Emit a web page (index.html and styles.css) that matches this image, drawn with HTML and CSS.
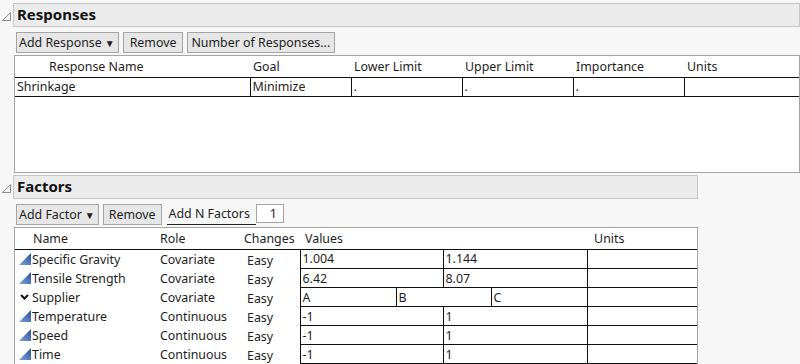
FILE: index.html
```html
<!DOCTYPE html>
<html lang="en">
<head>
<meta charset="utf-8">
<title>Responses and Factors</title>
<link rel="stylesheet" href="styles.css">
</head>
<body>
<div class="page">

  <!-- Responses outline -->
  <section class="outline">
    <div class="outline-head">
      <span class="disclose"><svg width="9" height="9" viewBox="0 0 9 9"><path d="M8.5 0.5 L8.5 8.5 L0.5 8.5 Z" fill="none" stroke="#8a8a8a" stroke-width="1"/></svg></span>
      <div class="title title-wide">Responses</div>
    </div>
    <div class="content">
      <div class="btn-row">
        <button class="btn btn-add-resp">Add Response <span class="drop">&#9660;</span></button>
        <button class="btn btn-remove-resp">Remove</button>
        <button class="btn btn-num">Number of Responses...</button>
      </div>
      <div class="grid-box resp-box">
        <table class="grid resp-grid">
          <colgroup>
            <col style="width:235px"><col style="width:101px"><col style="width:111px"><col style="width:111px"><col style="width:111px"><col>
          </colgroup>
          <tr class="head">
            <th class="first">Response Name</th>
            <th>Goal</th>
            <th>Lower Limit</th>
            <th>Upper Limit</th>
            <th>Importance</th>
            <th>Units</th>
          </tr>
          <tr class="row">
            <td class="plain">Shrinkage</td>
            <td class="cell">Minimize</td>
            <td class="cell">.</td>
            <td class="cell">.</td>
            <td class="cell">.</td>
            <td class="cell"></td>
          </tr>
        </table>
      </div>
    </div>
  </section>

  <!-- Factors outline -->
  <section class="outline outline-factors">
    <div class="outline-head">
      <span class="disclose"><svg width="9" height="9" viewBox="0 0 9 9"><path d="M8.5 0.5 L8.5 8.5 L0.5 8.5 Z" fill="none" stroke="#8a8a8a" stroke-width="1"/></svg></span>
      <div class="title title-narrow">Factors</div>
    </div>
    <div class="content">
      <div class="btn-row">
        <button class="btn btn-add-fac">Add Factor <span class="drop">&#9660;</span></button>
        <button class="btn btn-remove-fac">Remove</button>
        <span class="nlabel">Add N Factors</span>
        <span class="nbox">1</span>
      </div>
      <div class="grid-box fac-box">
        <table class="grid fac-grid">
          <colgroup>
            <col style="width:140px"><col style="width:85px"><col style="width:60px">
            <col style="width:48px"><col style="width:48px"><col style="width:47px"><col style="width:48px"><col style="width:48px"><col style="width:48px">
            <col>
          </colgroup>
          <tr class="head">
            <th class="h-name">Name</th>
            <th class="h-role">Role</th>
            <th class="h-chg">Changes</th>
            <th class="h-val" colspan="6">Values</th>
            <th class="h-units">Units</th>
          </tr>
          <tr class="frow">
            <td class="fname"><svg class="ramp" width="12" height="12" viewBox="0 0 12 12"><defs><linearGradient id="g1" x1="0" y1="1" x2="1" y2="0"><stop offset="0" stop-color="#86a4d8"/><stop offset="1" stop-color="#1f4f9e"/></linearGradient></defs><path d="M0 12 L12 12 L12 0 Z" fill="url(#g1)"/></svg>Specific Gravity</td>
            <td class="frole">Covariate</td>
            <td class="fchg">Easy</td>
            <td class="cell" colspan="3">1.004</td>
            <td class="cell" colspan="3">1.144</td>
            <td class="cell"></td>
          </tr>
          <tr class="frow">
            <td class="fname"><svg class="ramp" width="12" height="12" viewBox="0 0 12 12"><path d="M0 12 L12 12 L12 0 Z" fill="url(#g1)"/></svg>Tensile Strength</td>
            <td class="frole">Covariate</td>
            <td class="fchg">Easy</td>
            <td class="cell" colspan="3">6.42</td>
            <td class="cell" colspan="3">8.07</td>
            <td class="cell"></td>
          </tr>
          <tr class="frow">
            <td class="fname"><svg class="chev" width="12" height="12" viewBox="0 0 12 12"><path d="M2 4 L5.5 7.5 L9 4" fill="none" stroke="#111" stroke-width="2"/></svg>Supplier</td>
            <td class="frole">Covariate</td>
            <td class="fchg">Easy</td>
            <td class="cell" colspan="2">A</td>
            <td class="cell" colspan="2">B</td>
            <td class="cell" colspan="2">C</td>
            <td class="cell"></td>
          </tr>
          <tr class="frow">
            <td class="fname"><svg class="ramp" width="12" height="12" viewBox="0 0 12 12"><path d="M0 12 L12 12 L12 0 Z" fill="url(#g1)"/></svg>Temperature</td>
            <td class="frole">Continuous</td>
            <td class="fchg">Easy</td>
            <td class="cell" colspan="3">-1</td>
            <td class="cell" colspan="3">1</td>
            <td class="cell"></td>
          </tr>
          <tr class="frow">
            <td class="fname"><svg class="ramp" width="12" height="12" viewBox="0 0 12 12"><path d="M0 12 L12 12 L12 0 Z" fill="url(#g1)"/></svg>Speed</td>
            <td class="frole">Continuous</td>
            <td class="fchg">Easy</td>
            <td class="cell" colspan="3">-1</td>
            <td class="cell" colspan="3">1</td>
            <td class="cell"></td>
          </tr>
          <tr class="frow">
            <td class="fname"><svg class="ramp" width="12" height="12" viewBox="0 0 12 12"><path d="M0 12 L12 12 L12 0 Z" fill="url(#g1)"/></svg>Time</td>
            <td class="frole">Continuous</td>
            <td class="fchg">Easy</td>
            <td class="cell" colspan="3">-1</td>
            <td class="cell" colspan="3">1</td>
            <td class="cell"></td>
          </tr>
        </table>
      </div>
    </div>
  </section>

</div>
</body>
</html>
```

FILE: styles.css
```css
body {
	margin: 0;
	background: #f7f7f7;
	font-family: "Noto Sans", "Open Sans", sans-serif;
	font-size: 12.4px;
	color: #1e1e1e;
	overflow: hidden;
}

.page {
	padding-top: 3px;
}

/* outline headers */
.outline-head {
	display: flex;
	align-items: stretch;
	height: 24px;
}
.disclose {
	width: 13px;
	display: flex;
	align-items: center;
	padding-left: 2px;
	box-sizing: border-box;
	padding-top: 2px;
}
.title {
	box-sizing: border-box;
	border: 1px solid #c6c6c6;
	background: #ebebeb;
	font-weight: bold;
	font-size: 15px;
	line-height: 21px;
	padding-left: 3px;
	color: #111;
}
.title-wide { width: 787px; }
.title-narrow { width: 685px; }

.outline-factors {
	margin-top: 2px;
}

.content {
	padding-left: 14px;
}

/* buttons */
.btn-row {
	display: flex;
	align-items: center;
	gap: 4px;
	height: 21px;
	margin-top: 5px;
	padding-left: 2px;
}
.btn {
	box-sizing: border-box;
	height: 21px;
	border: 1px solid #a4a4a4;
	background: #e6e6e6;
	font-family: inherit;
	font-size: 12.4px;
	color: #1e1e1e;
	padding: 0 3px 0 2px;
	margin: 0;
	display: flex;
	align-items: center;
}
.drop {
	font-size: 10px;
	margin-left: 3px;
}
.btn-remove-resp { padding: 0 6px; }
.btn-num { padding: 0 4px 0 3px; }
.btn-remove-fac { padding: 0 5px; }
.nlabel {
	margin-left: 1px;
	padding: 0 6px 0 2px;
	height: 21px;
	line-height: 19px;
	box-sizing: border-box;
	border-bottom: 1px solid #222;
}
.nbox {
	box-sizing: border-box;
	width: 28px;
	height: 19px;
	margin-left: -4px;
	margin-top: -2px;
	border: 1px solid #a4a4a4;
	background: #fff;
	text-align: right;
	padding-right: 6px;
	line-height: 17px;
}

/* grids */
.grid-box {
	box-sizing: border-box;
	border: 1px solid #a4a4a4;
	background: #fff;
	margin-top: 2px;
}
.resp-box {
	width: 786px;
	height: 118px;
}
.fac-box {
	width: 684px;
	height: 160px;
}
.grid {
	border-collapse: collapse;
	table-layout: fixed;
	width: 100%;
}
.grid th {
	font-weight: normal;
	text-align: left;
	padding: 0 0 0 3px;
	white-space: nowrap;
}
.grid td {
	padding: 0 0 0 3px;
	white-space: nowrap;
	overflow: hidden;
}
.grid .head {
	height: 21px;
	border-bottom: 1px solid #111;
}
.resp-grid th.first { padding-left: 34px; }
.resp-grid .row { height: 19px; border-bottom: 1px solid #111; }
.resp-grid td.plain { padding-left: 2px; }
.grid td.cell { border-left: 1px solid #111; padding-left: 2px; }

.fac-grid .h-name { padding-left: 18px; }
.fac-grid .h-role { padding-left: 5px; }
.fac-grid .h-chg { padding-left: 4px; }
.fac-grid .h-val { padding-left: 5px; }
.fac-grid .h-units { padding-left: 7px; }
.fac-grid .frow { height: 19px; }
.fac-grid .frow td.cell { border-bottom: 1px solid #111; }
.fac-grid td.fname { padding-left: 4px; }
.fac-grid td.frole { padding-left: 5px; }
.fac-grid td.fchg { padding-left: 7px; padding-top: 3px; line-height: 16px; }
.ramp, .chev {
	vertical-align: -1px;
	margin-right: 1px;
}
```
